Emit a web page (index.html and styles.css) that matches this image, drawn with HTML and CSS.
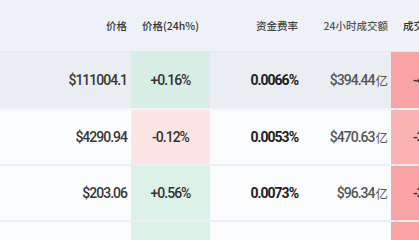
FILE: index.html
```html
<!DOCTYPE html>
<html lang="zh">
<head>
<meta charset="utf-8">
<link rel="stylesheet" href="styles.css">
</head>
<body>
<div class="table">
  <div class="row head">
    <div class="cell name"></div>
    <div class="cell price">价格</div>
    <div class="cell chg">价格(24h%)</div>
    <div class="cell fund">资金费率</div>
    <div class="cell vol">24小时成交额</div>
    <div class="cell last">成交额(24h%)</div>
  </div>
  <div class="row sel">
    <div class="cell name"></div>
    <div class="cell price">$111004.1</div>
    <div class="cell chg up">+0.16%</div>
    <div class="cell fund">0.0066%</div>
    <div class="cell vol">$394.44<span class="unit">亿</span></div>
    <div class="cell last down1">-40.12%</div>
  </div>
  <div class="row">
    <div class="cell name"></div>
    <div class="cell price">$4290.94</div>
    <div class="cell chg down">-0.12%</div>
    <div class="cell fund">0.0053%</div>
    <div class="cell vol">$470.63<span class="unit">亿</span></div>
    <div class="cell last down2">-31.05%</div>
  </div>
  <div class="row">
    <div class="cell name"></div>
    <div class="cell price">$203.06</div>
    <div class="cell chg up">+0.56%</div>
    <div class="cell fund">0.0073%</div>
    <div class="cell vol">$96.34<span class="unit">亿</span></div>
    <div class="cell last down1">-38.22%</div>
  </div>
  <div class="row">
    <div class="cell name"></div>
    <div class="cell price">$2.8812</div>
    <div class="cell chg up">+1.02%</div>
    <div class="cell fund">0.0100%</div>
    <div class="cell vol">$62.11<span class="unit">亿</span></div>
    <div class="cell last down1">-35.40%</div>
  </div>
</div>
</body>
</html>
```

FILE: styles.css
```css
html, body {
  margin: 0;
  padding: 0;
  overflow: hidden;
  width: 419px;
  height: 240px;
}
body {
  background: #fafbfc;
  font-family: Roboto, "Noto Sans CJK SC", sans-serif;
  color: #333;
}
.table {
  display: flex;
  flex-direction: column;
  width: 480px;
}
.row {
  display: grid;
  grid-template-columns: 60px 71px 79px 92px 89px 89px;
  height: 54px;
  border-bottom: 2px solid #eceef1;
  background: #fafbfc;
}
.row.head {
  height: 51px;
  background: #eef1f5;
  border-bottom: 1px solid #e4e8ed;
  font-family: "Noto Sans CJK SC", sans-serif;
  color: #444;
}
.row.sel {
  height: 56px;
  background: #eaeef3;
  border-bottom-color: #f2f4f7;
}
.cell {
  display: flex;
  align-items: center;
  font-size: 14px;
  font-weight: 500;
  letter-spacing: -1px;
  white-space: nowrap;
}
.head .cell { font-size: 10.5px; letter-spacing: 0; font-weight: 500; }
.price { justify-content: flex-end; padding-right: 4px; color: #383838; }
.chg { justify-content: center; color: #333; }
.fund { justify-content: flex-end; padding-right: 4px; font-weight: bold; color: #222; }
.head .fund { color: #444; font-weight: 500; }
.vol { justify-content: flex-end; padding-right: 3px; color: #555; }
.unit { font-size: 12.5px; font-weight: 400; letter-spacing: 0; margin-left: 1px; }
.last { padding-left: 22px; color: #333; }
.head .last { padding-left: 12px; }
.up { background: #dcf1e8; }
.sel .up { background: #d8ede5; }
.down { background: #fde5e5; }
.down1 { background: #f9a3a4; }
.down2 { background: #fab2b2; }
```
